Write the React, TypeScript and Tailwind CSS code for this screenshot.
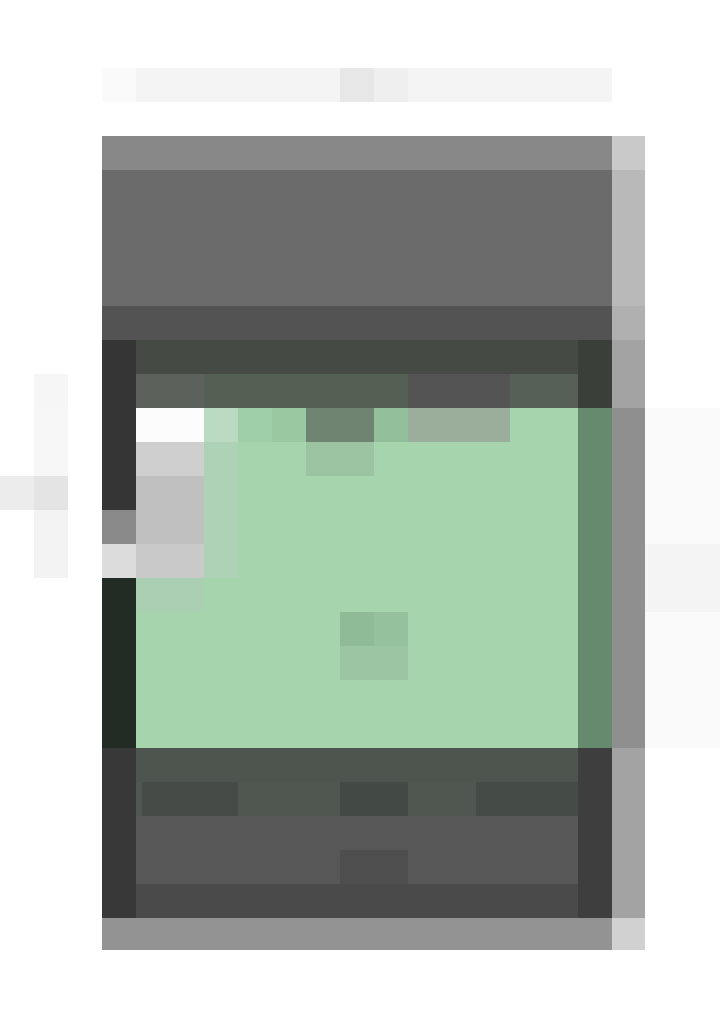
import React from "react";

// Pixel-mosaic view: a dimmed browser window with a green card in the middle

function SearchStrip() {
  return (
    <div className="ml-[102px] mt-[68px] flex h-[34px] w-[510px]">
      <div className="w-[34px] bg-[#fafafa]" />
      <div className="w-[204px] bg-[#f4f4f4]" />
      <div className="w-[34px] bg-[#e7e7e7]" />
      <div className="w-[34px] bg-[#efefef]" />
      <div className="w-[204px] bg-[#f4f4f4]" />
    </div>
  );
}

function LeftGutter() {
  return (
    <div className="flex w-[102px] flex-col">
      <div className="h-[238px]" />
      <div className="flex h-[34px]">
        <div className="w-[34px]" />
        <div className="w-[34px] bg-[#f6f6f6]" />
      </div>
      <div className="flex h-[68px]">
        <div className="w-[34px]" />
        <div className="w-[34px] bg-[#f7f7f7]" />
      </div>
      <div className="flex h-[34px]">
        <div className="w-[34px] bg-[#ececec]" />
        <div className="w-[34px] bg-[#e4e4e4]" />
      </div>
      <div className="flex h-[68px]">
        <div className="w-[34px]" />
        <div className="w-[34px] bg-[#f3f3f3]" />
      </div>
    </div>
  );
}

function GreenCard() {
  return (
    <div className="grid h-[340px] w-[442px] grid-cols-[repeat(13,34px)] grid-rows-[repeat(10,34px)] bg-[#a5d4ad]">
      <div className="col-start-1 col-span-2 row-start-1 bg-[#fcfcfc]" />
      <div className="col-start-1 col-span-2 row-start-2 bg-[#cfcfcf]" />
      <div className="col-start-1 col-span-2 row-start-3 row-span-2 bg-[#c0c0c0]" />
      <div className="col-start-1 col-span-2 row-start-5 bg-[#c9c9c9]" />
      <div className="col-start-1 col-span-2 row-start-6 bg-[#abcfb2]" />
      <div className="col-start-3 row-start-1 bg-[#badbc2]" />
      <div className="col-start-3 row-start-2 row-span-4 bg-[#aed2b5]" />
      <div className="col-start-4 row-start-1 bg-[#9ecfa8]" />
      <div className="col-start-5 row-start-1 bg-[#99c8a1]" />
      <div className="col-start-6 col-span-2 row-start-1 bg-[#6e8370]" />
      <div className="col-start-6 col-span-2 row-start-2 bg-[#9cc3a2]" />
      <div className="col-start-8 row-start-1 bg-[#93bf9b]" />
      <div className="col-start-9 col-span-3 row-start-1 bg-[#9bae9c]" />
      <div className="col-start-7 row-start-7 bg-[#8fbb96]" />
      <div className="col-start-8 row-start-7 bg-[#96c19d]" />
      <div className="col-start-7 col-span-2 row-start-8 bg-[#9cc6a3]" />
    </div>
  );
}

function CardFooter() {
  return (
    <div className="flex h-[170px] w-[442px] flex-col">
      <div className="h-[34px] bg-[#4d554e]" />
      <div className="flex h-[34px] bg-[#4f5750]">
        <div className="w-[6px]" />
        <div className="w-[96px] bg-[#474b47]" />
        <div className="w-[102px]" />
        <div className="w-[68px] bg-[#434944]" />
        <div className="w-[68px]" />
        <div className="w-[102px] bg-[#454b46]" />
      </div>
      <div className="h-[34px] bg-[#575757]" />
      <div className="flex h-[34px] bg-[#575757]">
        <div className="w-[204px]" />
        <div className="w-[68px] bg-[#4e4e4e]" />
      </div>
      <div className="h-[34px] bg-[#4a4a4a]" />
    </div>
  );
}

function Window() {
  return (
    <div className="flex w-[510px] flex-col">
      <div className="h-[34px] bg-[#888888]" />
      <div className="h-[136px] bg-[#6b6b6b]" />
      <div className="h-[34px] bg-[#535353]" />
      <div className="flex h-[578px]">
        <div className="flex w-[34px] flex-col">
          <div className="h-[170px] bg-[#353535]" />
          <div className="h-[34px] bg-[#8a8a8a]" />
          <div className="h-[34px] bg-[#dcdcdc]" />
          <div className="h-[170px] bg-[#232b25]" />
          <div className="h-[170px] bg-[#383838]" />
        </div>
        <div className="flex w-[442px] flex-col">
          <div className="h-[34px] bg-[#454a45]" />
          <div className="flex h-[34px]">
            <div className="w-[68px] bg-[#5c615c]" />
            <div className="w-[204px] bg-[#556055]" />
            <div className="w-[102px] bg-[#545454]" />
            <div className="w-[68px] bg-[#566056]" />
          </div>
          <GreenCard />
          <CardFooter />
        </div>
        <div className="flex w-[34px] flex-col">
          <div className="h-[68px] bg-[#3a3f3a]" />
          <div className="h-[340px] bg-[#668a6e]" />
          <div className="h-[170px] bg-[#3e3e3e]" />
        </div>
      </div>
      <div className="h-[32px] bg-[#939393]" />
    </div>
  );
}

function Scrollbar() {
  return (
    <div className="flex w-[33px] flex-col">
      <div className="h-[34px] bg-[#c9c9c9]" />
      <div className="h-[136px] bg-[#b9b9b9]" />
      <div className="h-[34px] bg-[#b0b0b0]" />
      <div className="h-[68px] bg-[#a3a3a3]" />
      <div className="h-[340px] bg-[#8f8f8f]" />
      <div className="h-[170px] bg-[#a3a3a3]" />
      <div className="h-[32px] bg-[#d1d1d1]" />
    </div>
  );
}

function RightGutter() {
  return (
    <div className="flex w-[75px] flex-col">
      <div className="h-[272px]" />
      <div className="h-[136px] bg-[#fafafa]" />
      <div className="h-[68px] bg-[#f4f4f4]" />
      <div className="h-[136px] bg-[#fafafa]" />
    </div>
  );
}

export default function App() {
  return (
    <div className="h-[1018px] w-[720px] overflow-hidden bg-white font-['Liberation_Sans',sans-serif]">
      <SearchStrip />
      <div className="mt-[34px] flex">
        <LeftGutter />
        <Window />
        <Scrollbar />
        <RightGutter />
      </div>
    </div>
  );
}
